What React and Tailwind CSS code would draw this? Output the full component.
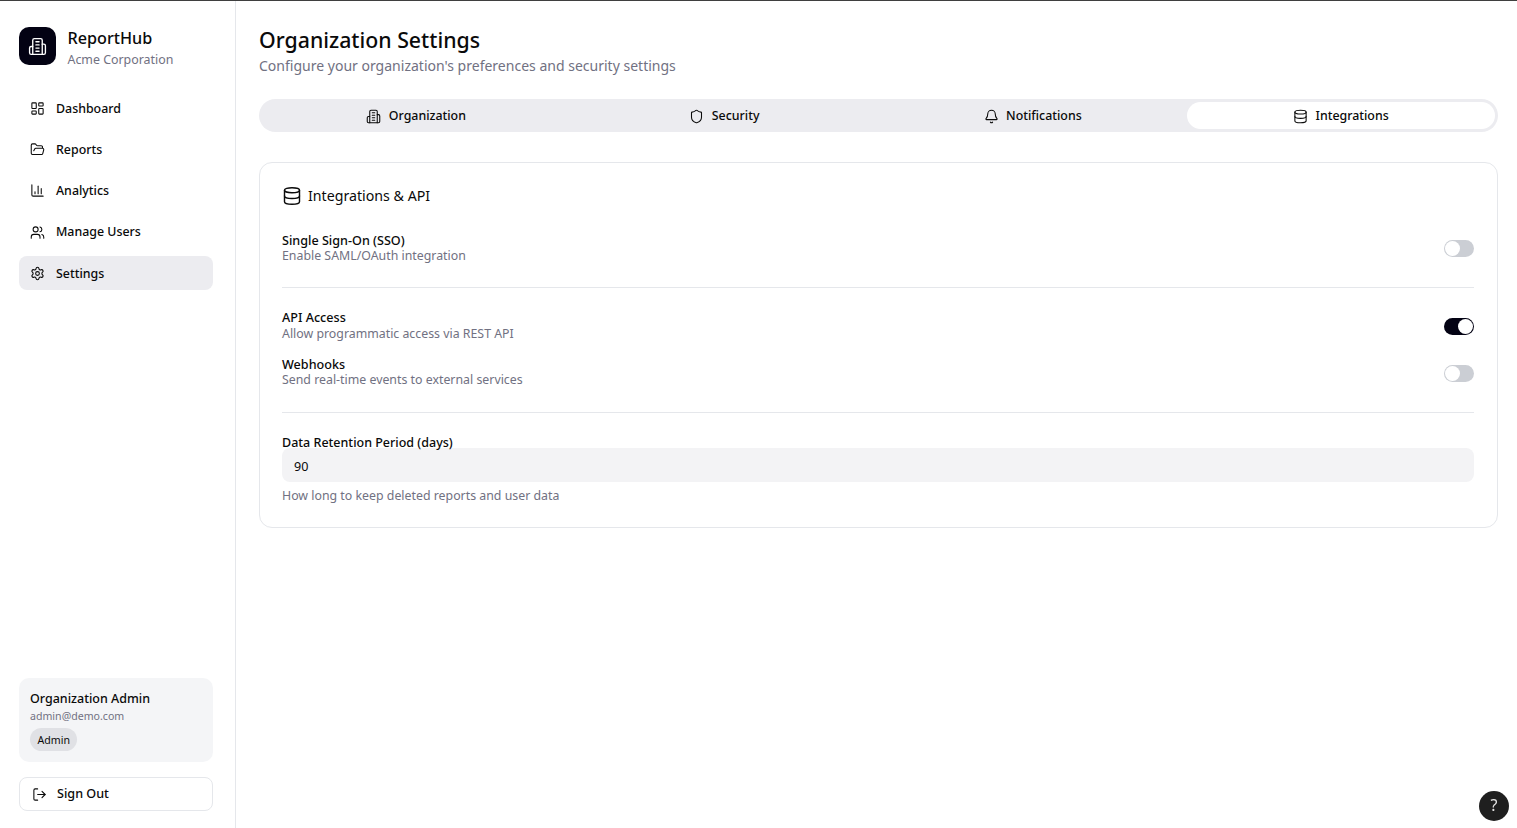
import { LayoutDashboard, FolderOpen, ChartColumn, Users, Settings, LogOut, Shield, Bell, Database } from 'lucide-react';

// older lucide building-2, the installed one has a different shape
function Building({ size = 15, color = 'currentColor', strokeWidth = 1.7 }) {
  return (
    <svg width={size} height={size} viewBox="0 0 24 24" fill="none" stroke={color} strokeWidth={strokeWidth} strokeLinecap="round" strokeLinejoin="round">
      <path d="M6 22V4a2 2 0 0 1 2-2h8a2 2 0 0 1 2 2v18Z" />
      <path d="M6 12H4a2 2 0 0 0-2 2v6a2 2 0 0 0 2 2h2" />
      <path d="M18 9h2a2 2 0 0 1 2 2v9a2 2 0 0 1-2 2h-2" />
      <path d="M10 6h4" />
      <path d="M10 10h4" />
      <path d="M10 14h4" />
      <path d="M10 18h4" />
    </svg>
  );
}

const NAV_ITEMS = [
  { label: 'Dashboard', icon: LayoutDashboard },
  { label: 'Reports', icon: FolderOpen },
  { label: 'Analytics', icon: ChartColumn },
  { label: 'Manage Users', icon: Users },
  { label: 'Settings', icon: Settings, active: true },
];

const TABS = [
  { label: 'Organization', icon: Building },
  { label: 'Security', icon: Shield },
  { label: 'Notifications', icon: Bell },
  { label: 'Integrations', icon: Database, active: true },
];

function Toggle({ on, className = '' }) {
  return (
    <div className={`flex h-[17px] w-[30px] shrink-0 items-center rounded-full p-px ${on ? 'justify-end bg-[#030213]' : 'justify-start bg-[#cbced4]'} ${className}`}>
      <div className="h-[15px] w-[15px] rounded-full bg-white" />
    </div>
  );
}

function SettingRow({ title, text, on, className, descClass = '', toggleClass = '' }) {
  return (
    <div className={`flex items-center justify-between ${className}`}>
      <div>
        <div className="text-[12.6px] leading-[15px] font-medium text-[#0a0a0a]">{title}</div>
        <div className={`text-[12.35px] leading-[15px] text-[#717182] ${descClass}`}>{text}</div>
      </div>
      <Toggle on={on} className={toggleClass} />
    </div>
  );
}

export default function App() {
  return (
    <div className="flex h-screen border-t border-[#3f3f3f] bg-white font-['Noto_Sans',sans-serif] text-[#0a0a0a]">
      {/* Sidebar */}
      <aside className="flex w-[236px] shrink-0 flex-col border-r border-[#e5e7eb] pt-[26px] pr-[22px] pb-[17px] pl-[19px]">
        <div className="flex items-start gap-[11.5px]">
          <div className="flex h-[38px] w-[37px] items-center justify-center rounded-[10px] bg-[#030213]">
            <Building size={19} color="#fff" strokeWidth={1.7} />
          </div>
          <div>
            <div className="text-[16.2px] leading-[22px] font-medium">ReportHub</div>
            <div className="mt-[2px] text-[12.4px] leading-[18px] text-[#717182]">Acme Corporation</div>
          </div>
        </div>

        <nav className="mt-[22px] flex flex-col gap-[7.3px]">
          {NAV_ITEMS.map((item) => (
            <div
              key={item.label}
              className={`flex h-[34px] items-center gap-[11px] rounded-[8px] px-[11px] pt-[1.8px] text-[12.4px] font-medium ${item.active ? 'bg-[#ececf0]' : ''}`}
            >
              <item.icon size={15} strokeWidth={1.7} className="-mt-px" />
              <span>{item.label}</span>
            </div>
          ))}
        </nav>

        <div className="mt-auto rounded-[10px] bg-[#f4f5f7] px-[11px] pt-[12px] pb-[11px]">
          <div className="text-[12.5px] leading-[18px] font-medium">Organization Admin</div>
          <div className="text-[10.6px] leading-[16px] text-[#717182]">admin@demo.com</div>
          <div className="mt-[4px] inline-flex h-[23px] items-center rounded-full bg-[#e0e1e5] px-[7.5px] pt-[2px] text-[10.6px]">Admin</div>
        </div>

        <div className="mt-[15px] flex h-[34px] items-center gap-[10px] rounded-[8px] border border-[#e5e7eb] px-[12px] text-[12.6px] font-medium">
          <LogOut size={15} strokeWidth={1.7} />
          <span>Sign Out</span>
        </div>
      </aside>

      {/* Main */}
      <main className="flex-1 pt-[23px] pr-[19px] pl-[23px]">
        <h1 className="text-[21.3px] leading-[32px] font-medium">Organization Settings</h1>
        <p className="text-[14.03px] leading-[20px] text-[#717182]">Configure your organization's preferences and security settings</p>

        <div className="mt-[23px] grid h-[33px] grid-cols-4 rounded-full bg-[#ececf0] p-[3px]">
          {TABS.map((tab) => (
            <div
              key={tab.label}
              className={`flex items-center justify-center gap-[7.5px] rounded-full pt-px text-[12.4px] font-medium ${tab.active ? 'bg-white' : ''}`}
            >
              <tab.icon size={15} strokeWidth={1.7} />
              <span>{tab.label}</span>
            </div>
          ))}
        </div>

        <section className="mt-[30px] rounded-[13px] border border-[#e5e7eb] pt-[22px] pr-[23px] pb-[24px] pl-[22px]">
          <div className="flex items-center gap-[6px]">
            <Database size={20} strokeWidth={1.7} />
            <h2 className="text-[14.2px] leading-[22px]">Integrations &amp; API</h2>
          </div>

          <SettingRow className="mt-[26px]" title="Single Sign-On (SSO)" text="Enable SAML/OAuth integration" />
          <div className="mt-[24px] h-px bg-[#e5e7eb]" />
          <SettingRow className="mt-[22px]" title="API Access" text="Allow programmatic access via REST API" descClass="mt-px" toggleClass="mt-[2px]" on />
          <SettingRow className="mt-[16px]" title="Webhooks" text="Send real-time events to external services" toggleClass="mt-[2px]" />
          <div className="mt-[25px] h-px bg-[#e5e7eb]" />

          <div className="mt-[22px] text-[12.5px] leading-[15px] font-medium">Data Retention Period (days)</div>
          <div className="mt-[-2px] flex h-[34px] items-center rounded-[8px] bg-[#f3f3f5] px-[12px] pt-[4px] text-[12.6px]">90</div>
          <p className="mt-[6px] text-[12.35px] leading-[15px] text-[#717182]">How long to keep deleted reports and user data</p>
        </section>
      </main>

      {/* Help button */}
      <div className="fixed right-[8px] bottom-[7px] flex h-[30px] w-[30px] items-center justify-center rounded-full bg-[#1f1f1f] pb-[2px] text-[16px] text-[#e5e5e5]">?</div>
    </div>
  );
}
